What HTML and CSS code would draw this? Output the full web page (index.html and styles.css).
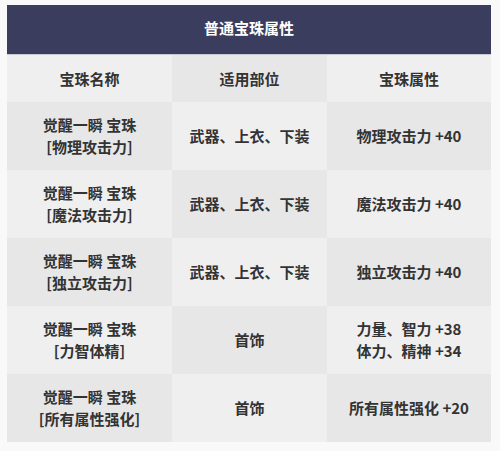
FILE: index.html
```html
<!DOCTYPE html>
<html lang="zh-CN">
<head>
<meta charset="utf-8">
<link rel="stylesheet" href="styles.css">
</head>
<body>
<div class="frame">
  <table class="gem-table">
    <colgroup>
      <col class="c1"><col class="c2"><col class="c3">
    </colgroup>
    <thead>
      <tr><th class="title" colspan="3">普通宝珠属性</th></tr>
      <tr class="head">
        <th class="light">宝珠名称</th>
        <th class="dark">适用部位</th>
        <th class="light">宝珠属性</th>
      </tr>
    </thead>
    <tbody>
      <tr>
        <td class="dark">觉醒一瞬 宝珠<br>[物理攻击力]</td>
        <td class="light">武器、上衣、下装</td>
        <td class="dark">物理攻击力 +40</td>
      </tr>
      <tr>
        <td class="light">觉醒一瞬 宝珠<br>[魔法攻击力]</td>
        <td class="dark">武器、上衣、下装</td>
        <td class="light">魔法攻击力 +40</td>
      </tr>
      <tr>
        <td class="dark">觉醒一瞬 宝珠<br>[独立攻击力]</td>
        <td class="light">武器、上衣、下装</td>
        <td class="dark">独立攻击力 +40</td>
      </tr>
      <tr>
        <td class="light">觉醒一瞬 宝珠<br>[力智体精]</td>
        <td class="dark">首饰</td>
        <td class="light">力量、智力 +38<br>体力、精神 +34</td>
      </tr>
      <tr>
        <td class="dark">觉醒一瞬 宝珠<br>[所有属性强化]</td>
        <td class="light">首饰</td>
        <td class="dark">所有属性强化 +20</td>
      </tr>
    </tbody>
  </table>
</div>
</body>
</html>
```
FILE: styles.css
```css
html, body {
  margin: 0;
  padding: 0;
  background: #f9f9f9;
}
body {
  width: 500px;
  height: 451px;
  overflow: hidden;
  font-family: "Noto Sans CJK SC", "Noto Sans", sans-serif;
  color: #333;
}
.frame {
  padding: 5px 9px 0 7px;
}
.gem-table {
  width: 484px;
  border-collapse: collapse;
  table-layout: fixed;
  font-size: 15px;
  line-height: 22px;
}
.c1 { width: 165px; }
.c2 { width: 155px; }
.c3 { width: 164px; }
.gem-table th,
.gem-table td {
  padding: 0;
  text-align: center;
  vertical-align: middle;
  font-weight: 600;
}
.gem-table th.title {
  height: 46px;
  padding-bottom: 3px;
  background: #3b3d5f;
  color: #fff;
  font-weight: 700;
  border-bottom: 1px solid #c9c9d6;
}
.head th {
  height: 47px;
}
.gem-table td {
  height: 68px;
}
.light { background: #efefef; }
.dark { background: #e7e7e7; }
```
